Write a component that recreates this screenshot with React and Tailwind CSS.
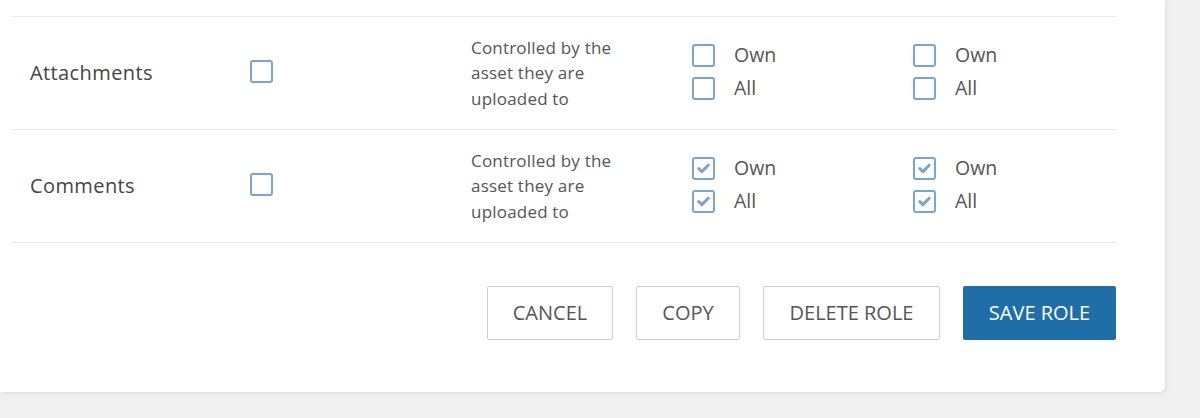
import React from "react";

const rows = [
  { name: "Attachments", own: false, all: false, own2: false, all2: false },
  { name: "Comments", own: true, all: true, own2: true, all2: true },
];

function Box({ checked }) {
  return (
    <span className="flex h-[23px] w-[23px] shrink-0 items-center justify-center rounded-[3px] border-[2.5px] border-[#79a6cd] bg-white">
      {checked && (
        <svg width="13" height="11" viewBox="0 0 13 11" fill="none">
          <path d="M1.8 5.6 L4.9 8.6 L11.2 2.2" stroke="#79a6cd" strokeWidth="3" strokeLinecap="round" strokeLinejoin="round" />
        </svg>
      )}
    </span>
  );
}

function OwnAll({ own, all }) {
  return (
    <div className="mb-[3px] flex flex-col gap-[10px]">
      <div className="flex h-[23px] items-center gap-[19px]">
        <Box checked={own} />
        <span className="text-[19.5px] leading-none text-[#555]">Own</span>
      </div>
      <div className="flex h-[23px] items-center gap-[19px]">
        <Box checked={all} />
        <span className="text-[19.5px] leading-none text-[#555]">All</span>
      </div>
    </div>
  );
}

export default function App() {
  return (
    <div className="h-[418px] w-[1200px] overflow-hidden bg-[#f0f0f0]" style={{ fontFamily: "'Open Sans', 'Noto Sans', sans-serif" }}>
      <div className="w-[1165px] rounded-br-[6px] bg-white pb-[52px] pl-[11px] pr-[49px] shadow-[1px_1px_4px_rgba(0,0,0,0.08)]">
        <div className="h-[17px] border-b border-[#ececec]" />
        {rows.map((r) => (
          <div key={r.name} className="grid h-[113px] grid-cols-[220px_221px_221px_221px_1fr] items-center border-b border-[#ececec] pl-[19px]">
            <span className="text-[20px] tracking-[0.4px] text-[#444]">{r.name}</span>
            <span className="mb-[3px]">
              <Box checked={false} />
            </span>
            <p className="w-[175px] text-[17px] leading-[25.5px] tracking-[0.2px] text-[#555]">
              Controlled by the asset they are uploaded to
            </p>
            <OwnAll own={r.own} all={r.all} />
            <OwnAll own={r.own2} all={r.all2} />
          </div>
        ))}
        <div className="mt-[43px] flex justify-end gap-[23px]">
          <button className="h-[54px] w-[126px] rounded-[2px] border border-[#d0d0d0] bg-white text-[20px] text-[#555]">CANCEL</button>
          <button className="h-[54px] w-[104px] rounded-[2px] border border-[#d0d0d0] bg-white text-[20px] text-[#555]">COPY</button>
          <button className="h-[54px] w-[177px] rounded-[2px] border border-[#d0d0d0] bg-white text-[20px] text-[#555]">DELETE ROLE</button>
          <button className="h-[54px] w-[153px] rounded-[2px] bg-[#206ea8] text-[20px] text-white">SAVE ROLE</button>
        </div>
      </div>
    </div>
  );
}
